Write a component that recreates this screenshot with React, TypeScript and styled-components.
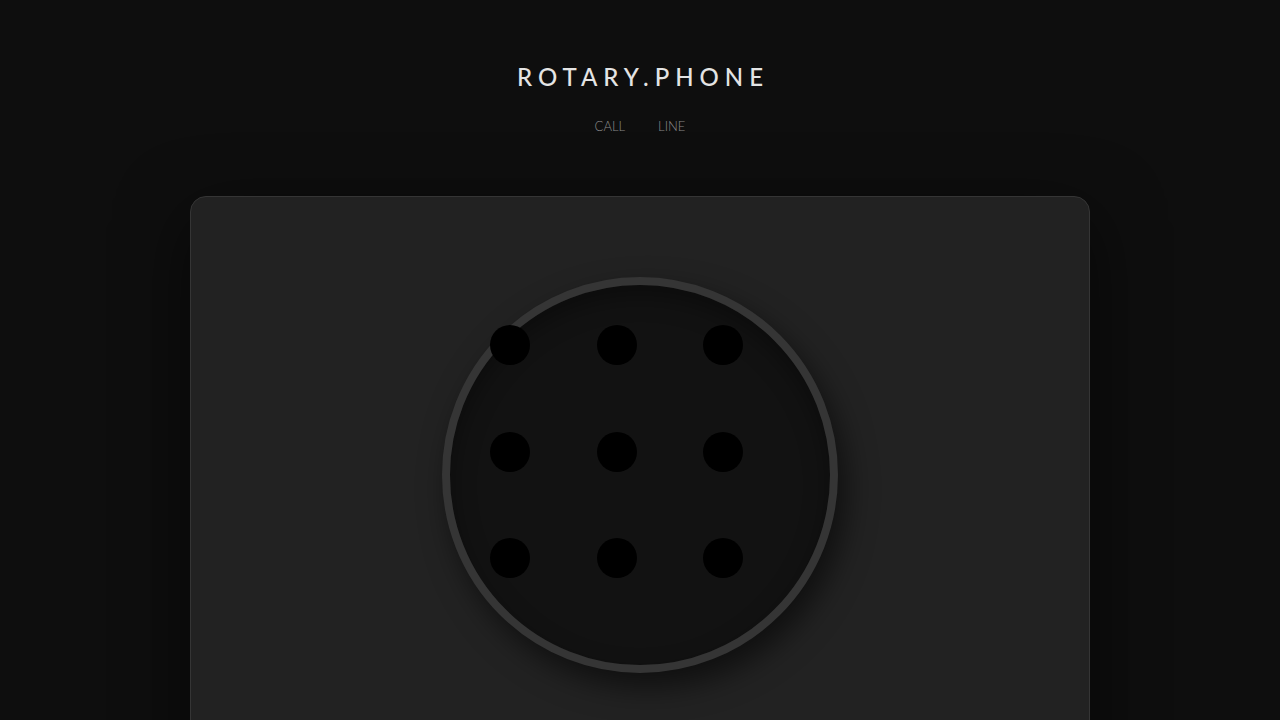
import React from "react";
import styled, { createGlobalStyle } from "styled-components";

const GlobalStyle = createGlobalStyle`
  html, body {
    margin: 0;
    padding: 0;
    background: #0e0e0e;
    font-family: Lato, "Open Sans", sans-serif;
  }
`;

const Page = styled.div`
  display: flex;
  flex-direction: column;
  align-items: center;
  padding-top: 62px;
  min-height: 720px;
  box-sizing: border-box;
`;

const Title = styled.h1`
  margin: 0;
  font-size: 24px;
  line-height: 29px;
  font-weight: 500;
  letter-spacing: 6px;
  margin-right: -6px;
  color: #e4e4e4;
`;

const Nav = styled.nav`
  display: flex;
  gap: 33px;
  margin-top: 27px;
`;

const NavItem = styled.a`
  font-size: 13px;
  line-height: 16px;
  font-weight: 300;
  color: #8a8a8a;
  text-decoration: none;
  cursor: pointer;
`;

const Card = styled.div`
  margin-top: 62px;
  width: 900px;
  height: 600px;
  box-sizing: border-box;
  background: #222222;
  border: 1px solid #353535;
  border-radius: 16px;
  box-shadow: 0 20px 70px rgba(0, 0, 0, 0.55);
  display: flex;
  justify-content: center;
  padding-top: 80px;
`;

const Dial = styled.div`
  width: 396px;
  height: 396px;
  box-sizing: border-box;
  border-radius: 50%;
  border: 8px solid #353535;
  background: #121212;
  box-shadow: 8px 14px 30px rgba(0, 0, 0, 0.55),
    inset 0 10px 24px rgba(0, 0, 0, 0.35);
  padding: 40px 0 0 40px;
`;

const Holes = styled.div`
  width: 320px;
  display: grid;
  grid-template-columns: repeat(3, 1fr);
  grid-auto-rows: 106.67px;
`;

const Hole = styled.div`
  width: 40px;
  height: 40px;
  border-radius: 50%;
  background: #000;
`;

export default function App() {
  return (
    <>
      <GlobalStyle />
      <Page>
        <Title>ROTARY.PHONE</Title>
        <Nav>
          <NavItem>CALL</NavItem>
          <NavItem>LINE</NavItem>
        </Nav>
        <Card>
          <Dial>
            <Holes>
              {Array.from({ length: 9 }).map((_, i) => (
                <Hole key={i} />
              ))}
            </Holes>
          </Dial>
        </Card>
      </Page>
    </>
  );
}
